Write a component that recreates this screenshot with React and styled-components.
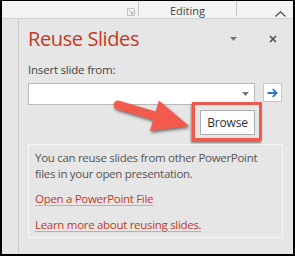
import React from "react";
import styled, { createGlobalStyle } from "styled-components";

const Global = createGlobalStyle`
  html, body { margin: 0; padding: 0; background: #000; }
  body { font-family: "Open Sans", "Noto Sans", sans-serif; }
`;

const Frame = styled.div`
  position: relative;
  box-sizing: border-box;
  width: 295px;
  height: 256px;
  border: 2px solid #000;
  border-top-width: 1px;
  background: #e6e6e6;
  display: flex;
  flex-direction: column;
  overflow: hidden;
`;

const Ribbon = styled.div`
  height: 17px;
  background: #f3f3f3;
  border-bottom: 1px solid #d2d2d2;
  display: flex;
  flex-shrink: 0;
`;

const RibbonSpacer = styled.div`
  flex: 1;
  display: flex;
  justify-content: flex-end;
  align-items: flex-start;
  padding: 7px 3px 0 0;
`;

const Separator = styled.div`
  width: 1px;
  height: 15px;
  background: #c4c4c4;
`;

const RibbonGroup = styled.div`
  width: 97px;
  text-align: center;
  font-size: 11px;
  line-height: 17px;
  padding-top: 1px;
  color: #444;
`;

const ChevronArea = styled.div`
  width: 56px;
  display: flex;
  align-items: flex-start;
  padding: 10px 0 0 38px;
  box-sizing: border-box;
`;

const Body = styled.div`
  flex: 1;
  display: flex;
`;

const Gutter = styled.div`
  width: 16px;
  border-right: 1px solid #c9c9c9;
`;

const Panel = styled.div`
  flex: 1;
  padding: 6px 10px 0 9px;
  display: flex;
  flex-direction: column;
`;

const Header = styled.div`
  display: flex;
  align-items: center;
  height: 28px;
`;

const Title = styled.h1`
  margin: 0;
  flex: 1;
  font-size: 20px;
  line-height: 28px;
  font-weight: 400;
  color: #c4391f;
  letter-spacing: -0.4px;
`;

const IconSlot = styled.div`
  width: ${(p) => p.$w}px;
  margin-right: ${(p) => p.$mr || 0}px;
  display: flex;
  justify-content: center;
  align-items: center;
`;

const Label = styled.div`
  margin-top: 9px;
  font-size: 11.5px;
  letter-spacing: -0.2px;
  line-height: 16px;
  color: #444;
`;

const ComboRow = styled.div`
  margin-top: 5px;
  display: flex;
  align-items: flex-start;
  gap: 8px;
`;

const Combo = styled.div`
  box-sizing: border-box;
  width: 227px;
  height: 22px;
  background: #fff;
  border: 1px solid #b9b9b9;
  display: flex;
  justify-content: flex-end;
  align-items: center;
  padding-right: 5px;
`;

const GoButton = styled.div`
  box-sizing: border-box;
  width: 19px;
  height: 19px;
  background: #fff;
  border: 1px solid #c8c8c8;
  display: flex;
  align-items: center;
  justify-content: center;
`;

const BrowseRow = styled.div`
  margin-top: 5px;
  display: flex;
  justify-content: flex-end;
  padding-right: 28px;
`;

const BrowseWrap = styled.div`
  position: relative;
`;

const Callout = styled.div`
  position: absolute;
  left: -8px;
  top: -8px;
  right: -7px;
  bottom: -6px;
  border: 3px solid #ef5a4f;
  box-shadow: -1px 2px 2px rgba(0, 0, 0, 0.45);
  pointer-events: none;
`;

const BrowseButton = styled.div`
  box-sizing: border-box;
  width: 55px;
  height: 25px;
  background: #fdfdfd;
  border: 1px solid #adadad;
  font-size: 12px;
  letter-spacing: -0.2px;
  line-height: 23px;
  text-align: center;
  color: #333;
`;

const InfoBox = styled.div`
  margin-top: 9px;
  box-sizing: border-box;
  height: 94px;
  border: 1px solid #f7f7f7;
  padding: 5px 6px;
`;

const InfoText = styled.p`
  margin: 0;
  font-size: 11.5px;
  letter-spacing: -0.3px;
  line-height: 15.5px;
  color: #555;
`;

const InfoLink = styled.a`
  display: block;
  margin-top: 10px;
  font-size: 11.5px;
  letter-spacing: -0.3px;
  line-height: 15.5px;
  color: #c4391f;
  text-decoration: underline;
  text-decoration-color: #e3a093;
  text-underline-offset: 2px;
`;

const ArrowSvg = styled.svg`
  position: absolute;
  left: 103px;
  top: 91px;
  filter: drop-shadow(1px 2px 1.5px rgba(0, 0, 0, 0.5));
  pointer-events: none;
`;

export default function App() {
  return (
    <>
      <Global />
      <Frame>
        <Ribbon>
          <RibbonSpacer>
            <svg width="8" height="8" viewBox="0 0 8 8">
              <path d="M0.5 0.5 H7.5 V7.5 H0.5 Z" fill="none" stroke="#c4c4c4" />
              <path d="M2 2 L6 6 M3.5 6 H6 V3.5" fill="none" stroke="#b0b0b0" />
            </svg>
          </RibbonSpacer>
          <Separator />
          <RibbonGroup>Editing</RibbonGroup>
          <Separator />
          <ChevronArea>
            <svg width="11" height="6" viewBox="0 0 11 6">
              <path d="M0.5 5.5 L5.5 0.8 L10.5 5.5" fill="none" stroke="#444" strokeWidth="1.1" />
            </svg>
          </ChevronArea>
        </Ribbon>
        <Body>
          <Gutter />
          <Panel>
            <Header>
              <Title>Reuse Slides</Title>
              <IconSlot $w={16} $mr={22}>
                <svg width="7" height="4" viewBox="0 0 7 4">
                  <path d="M0 0 H7 L3.5 4 Z" fill="#777" />
                </svg>
              </IconSlot>
              <IconSlot $w={20}>
                <svg width="8" height="8" viewBox="0 0 8 8">
                  <path d="M1 1 L7 7 M7 1 L1 7" stroke="#555" strokeWidth="1.7" />
                </svg>
              </IconSlot>
            </Header>
            <Label>Insert slide from:</Label>
            <ComboRow>
              <Combo>
                <svg width="7" height="4" viewBox="0 0 7 4">
                  <path d="M0 0 H7 L3.5 4 Z" fill="#777" />
                </svg>
              </Combo>
              <GoButton>
                <svg width="11" height="10" viewBox="0 0 11 10">
                  <path d="M0.5 5 H9.5 M5.8 1.2 L9.6 5 L5.8 8.8" fill="none" stroke="#2a76c6" strokeWidth="1.8" />
                </svg>
              </GoButton>
            </ComboRow>
            <BrowseRow>
              <BrowseWrap>
                <BrowseButton>Browse</BrowseButton>
                <Callout />
              </BrowseWrap>
            </BrowseRow>
            <InfoBox>
              <InfoText>
                You can reuse slides from other PowerPoint files in your open presentation.
              </InfoText>
              <InfoLink>Open a PowerPoint File</InfoLink>
              <InfoLink>Learn more about reusing slides.</InfoLink>
            </InfoBox>
          </Panel>
        </Body>
        <ArrowSvg width="90" height="45" viewBox="0 0 90 45">
          <path
            d="M14.3 8.7 L50.7 19.5 L53.9 8.5 L84 34 L44.9 39.1 L48.1 28.1 L11.7 17.3 A4.5 4.5 0 0 1 14.3 8.7 Z"
            fill="#f25a4e"
          />
        </ArrowSvg>
      </Frame>
    </>
  );
}
